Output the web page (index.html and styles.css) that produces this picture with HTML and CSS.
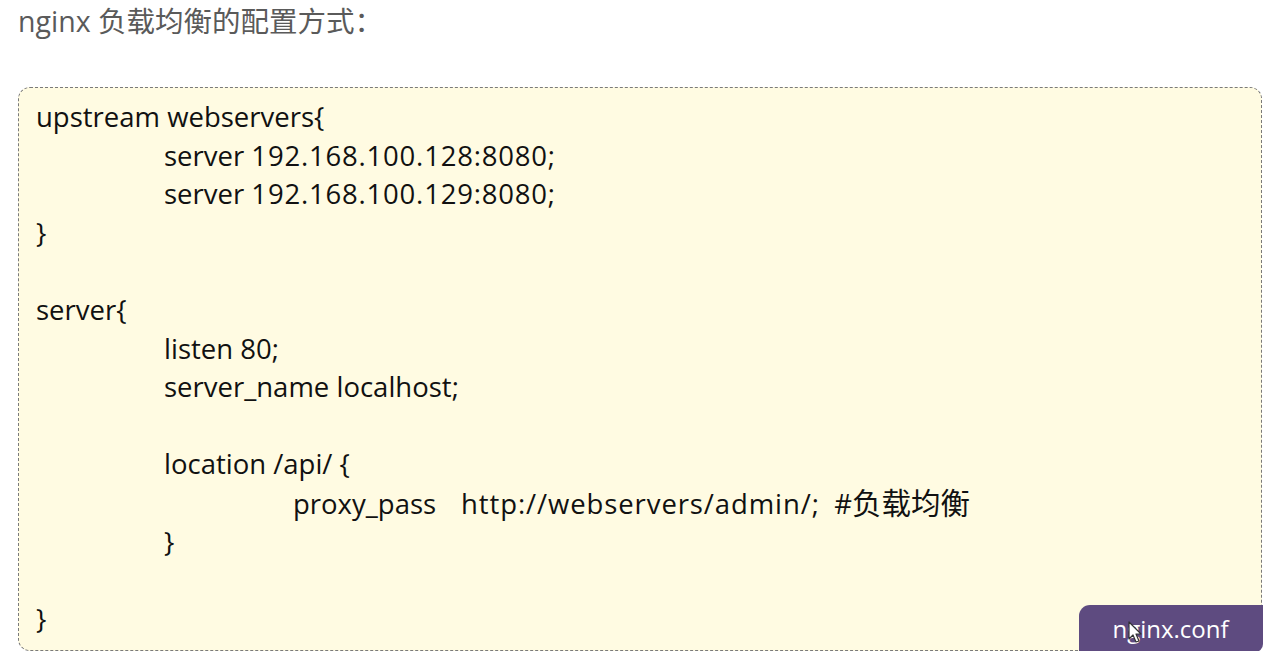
FILE: index.html
```html
<!DOCTYPE html>
<html lang="zh">
<head>
<meta charset="utf-8">
<title>nginx 负载均衡</title>
<link rel="stylesheet" href="styles.css">
</head>
<body>
<h1 class="title">nginx 负载均衡的配置方式：</h1>
<div class="box">
  <div class="line">upstream webservers{</div>
  <div class="line i1">server <span class="num">192.168.100.128:8080;</span></div>
  <div class="line i1">server <span class="num">192.168.100.129:8080;</span></div>
  <div class="line">}</div>
  <div class="line"></div>
  <div class="line">server{</div>
  <div class="line i1">listen 80;</div>
  <div class="line i1">server_name localhost;</div>
  <div class="line"></div>
  <div class="line i1">location /api/ {</div>
  <div class="line i2"><span class="key">proxy_pass</span><span class="url">http://webservers/admin/;</span>&nbsp; #<span class="cjk">负载均衡</span></div>
  <div class="line i1">}</div>
  <div class="line"></div>
  <div class="line">}</div>
  <div class="tab">nginx.conf</div>
  <svg class="cursor" width="16" height="24" viewBox="0 0 16 24"><path d="M1 1 L1 18 L5 14 L8 21 L11 20 L8 13 L13 13 Z" fill="#fff" stroke="#333" stroke-width="1.2" stroke-linejoin="round"/></svg>
</div>
</body>
</html>
```
FILE: styles.css
```css
html, body {
  margin: 0;
  padding: 0;
  background: #ffffff;
}
body {
  font-family: "Open Sans", "Noto Sans CJK SC", sans-serif;
}
.title {
  margin: 0;
  padding: 2px 0 0 18px;
  height: 87px;
  box-sizing: border-box;
  font-size: 28.5px;
  font-weight: normal;
  color: #5a5a5a;
  line-height: 38px;
}
.box {
  position: relative;
  margin: 0 17px 0 18px;
  height: 564px;
  box-sizing: border-box;
  border: 1.5px dashed #7a7a7a;
  border-radius: 12px;
  background: #fffbe2;
  padding: 10px 0 0 17px;
  color: #111;
  font-size: 27.5px;
}
.line {
  height: 38.6px;
  line-height: 38.6px;
  white-space: pre;
}
.i1 { padding-left: 128px; }
.i2 { padding-left: 257px; }
.key { display: inline-block; width: 168px; }
.num { letter-spacing: 0.8px; }
.url { letter-spacing: 0.9px; }
.cjk { font-size: 29.5px; }
.tab {
  position: absolute;
  right: -1.5px;
  bottom: -1.5px;
  width: 184px;
  height: 47px;
  background: #5e4b80;
  color: #fff;
  font-size: 24px;
  line-height: 47px;
  text-align: center;
  border-radius: 11px 0 8px 0;
}
.cursor {
  position: absolute;
  left: 1109px;
  bottom: 5px;
}
```
